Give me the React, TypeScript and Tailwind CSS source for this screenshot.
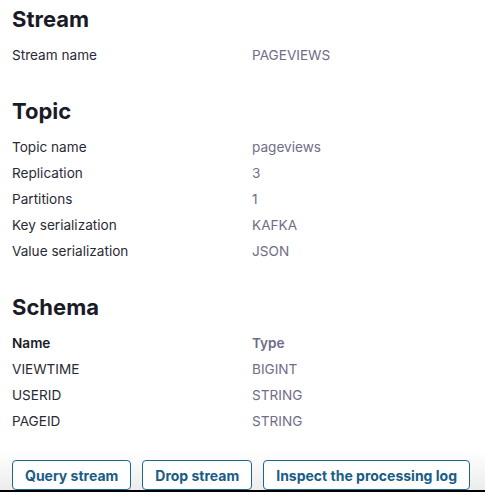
import React from 'react';

type Row = { label: string; value: string };

const streamRows: Row[] = [{ label: 'Stream name', value: 'PAGEVIEWS' }];

const topicRows: Row[] = [
  { label: 'Topic name', value: 'pageviews' },
  { label: 'Replication', value: '3' },
  { label: 'Partitions', value: '1' },
  { label: 'Key serialization', value: 'KAFKA' },
  { label: 'Value serialization', value: 'JSON' },
];

const schemaRows: Row[] = [
  { label: 'VIEWTIME', value: 'BIGINT' },
  { label: 'USERID', value: 'STRING' },
  { label: 'PAGEID', value: 'STRING' },
];

function Section({ title, rows, header }: { title: string; rows: Row[]; header?: Row }) {
  return (
    <section className="flex flex-col">
      <h2 className="text-[22px] font-bold leading-[28px] text-[#1b1b27] mb-[9px]">{title}</h2>
      <div className="grid grid-cols-[240px_1fr]">
        {header && (
          <>
            <div className="h-[26px] flex items-center font-semibold text-[#1b1b27]">{header.label}</div>
            <div className="h-[26px] flex items-center font-semibold text-[#6e6c87]">{header.value}</div>
          </>
        )}
        {rows.map((r) => (
          <React.Fragment key={r.label}>
            <div className="h-[26px] flex items-center text-[#2a2a36]">{r.label}</div>
            <div className="h-[26px] flex items-center text-[#6f6d88]">{r.value}</div>
          </React.Fragment>
        ))}
      </div>
    </section>
  );
}

export default function App() {
  const buttons = ['Query stream', 'Drop stream', 'Inspect the processing log'];
  return (
    <div
      className="h-[492px] w-[485px] flex flex-col bg-white text-[13.6px] overflow-hidden"
      style={{ fontFamily: 'Inter, "Noto Sans", sans-serif' }}
    >
      <div className="flex-1 flex flex-col gap-[29px] px-3 pt-[5px]">
        <Section title="Stream" rows={streamRows} />
        <Section title="Topic" rows={topicRows} />
        <Section title="Schema" rows={schemaRows} header={{ label: 'Name', value: 'Type' }} />
      </div>

      {/* footer actions */}
      <div className="bg-gradient-to-b from-white to-[#ececec] pt-[8px] px-3 flex gap-[11px]">
        {buttons.map((b) => (
          <button
            key={b}
            className="h-[30px] px-[12px] rounded-[4px] border border-[#1e6690] bg-white text-[#1a5c85] font-bold text-[14px]"
          >
            {b}
          </button>
        ))}
      </div>
      <div className="h-[2px] bg-black" />
    </div>
  );
}
